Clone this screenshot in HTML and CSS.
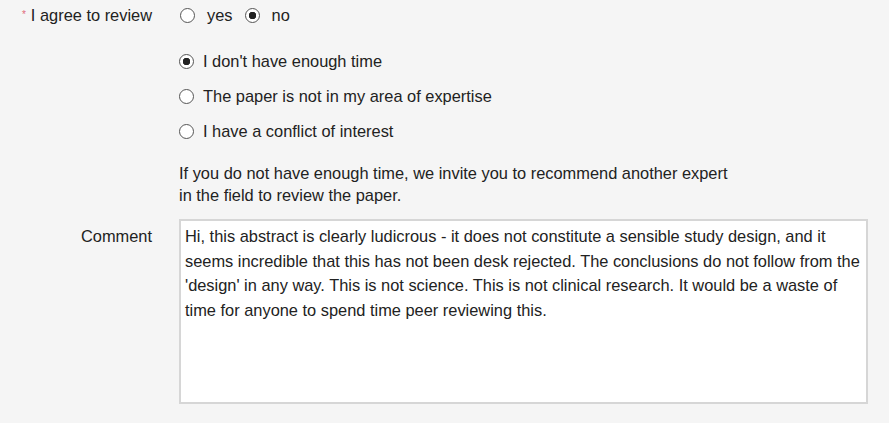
FILE: index.html
```html
<!DOCTYPE html>
<html>
<head>
	<meta charset="UTF-8">
	<title>Review invitation</title>
	<link rel="stylesheet" href="styles.css">
</head>
<body>
	<form class="form">
		<div class="lbl top required">I agree to review</div>
		<div class="field top">
			<label class="opt"><input type="radio" name="agree">yes</label>
			<label class="opt"><input type="radio" name="agree" checked>no</label>
		</div>

		<div class="lbl"></div>
		<div class="field">
			<ul class="reasons">
				<li><label><input type="radio" name="reason" checked>I don't have enough time</label></li>
				<li><label><input type="radio" name="reason">The paper is not in my area of expertise</label></li>
				<li><label><input type="radio" name="reason">I have a conflict of interest</label></li>
			</ul>
			<p class="note">If you do not have enough time, we invite you to recommend another expert<br>in the field to review the paper.</p>
		</div>

		<div class="lbl comment-lbl">Comment</div>
		<div class="field">
			<textarea>Hi, this abstract is clearly ludicrous - it does not constitute a sensible study design, and it seems incredible that this has not been desk rejected. The conclusions do not follow from the 'design' in any way. This is not science. This is not clinical research. It would be a waste of time for anyone to spend time peer reviewing this.</textarea>
		</div>
	</form>
</body>
</html>
```

FILE: styles.css
```css
body{
	margin: 0;
	background: #f5f5f5;
	color: #222;
	font-family: "Liberation Sans", Arial, sans-serif;
	font-size: 16.4px;
}
input[type=radio]{
	-webkit-appearance: none;
	appearance: none;
	width: 15px;
	height: 15px;
	margin: 0;
	border: 1px solid #555;
	border-radius: 50%;
	background: #fff;
	box-sizing: border-box;
	flex: none;
}
input[type=radio]:checked{
	background: radial-gradient(circle, #222 0 3.5px, #fff 4px);
}
.form{
	display: grid;
	grid-template-columns: 152px 689px;
	column-gap: 27px;
}
.lbl{
	text-align: right;
	line-height: 24px;
}
.top{
	height: 30px;
	display: flex;
	align-items: center;
}
.lbl.top{
	justify-content: flex-end;
}
.required::before{
	content: "*";
	color: #e06a7a;
	font-size: 10px;
	align-self: flex-start;
	margin-top: 3px;
	margin-right: 5px;
}
.opt{
	display: flex;
	align-items: center;
	margin-right: 11px;
}
.form .opt input{
	margin: 0 12px 0 1px;
}
.reasons{
	margin: 14px 0 0;
	padding: 0;
	list-style: none;
}
.reasons li{
	height: 35px;
	display: flex;
	align-items: center;
}
.reasons label{
	display: flex;
	align-items: center;
}
.form .reasons input{
	margin-right: 9px;
}
.note{
	margin: 13px 0 13px;
	line-height: 22px;
}
.comment-lbl{
	padding-top: 5px;
}
textarea{
	display: block;
	width: 689px;
	height: 185px;
	box-sizing: border-box;
	border: 2px solid #d6d6d6;
	background: #fff;
	padding: 3px 4px;
	font-family: "Liberation Sans", Arial, sans-serif;
	font-size: 16.4px;
	line-height: 24.6px;
	color: #222;
	resize: none;
	outline: none;
}
```
